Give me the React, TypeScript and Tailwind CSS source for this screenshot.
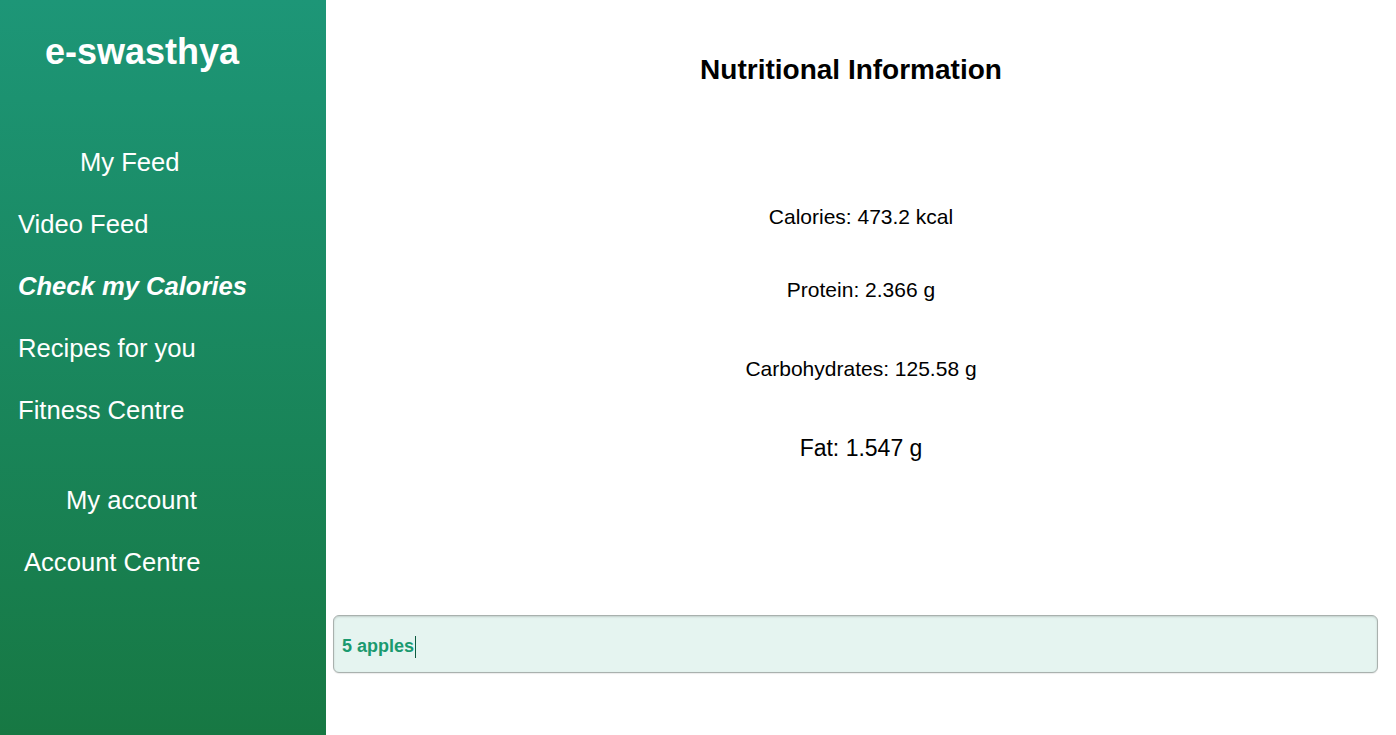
import React from 'react';

const navItems = [
  { label: 'Video Feed', pad: 'pl-[18px]' },
  { label: 'Check my Calories', pad: 'pl-[18px]', active: true },
  { label: 'Recipes for you', pad: 'pl-[18px]' },
  { label: 'Fitness Centre', pad: 'pl-[18px]' },
];

const nutrients = [
  { text: 'Calories: 473.2 kcal', cls: 'mt-[117px] text-[21px]' },
  { text: 'Protein: 2.366 g', cls: 'mt-[43px] text-[21px]' },
  { text: 'Carbohydrates: 125.58 g', cls: 'mt-[49px] text-[21px]' },
  { text: 'Fat: 1.547 g', cls: 'mt-[49px] text-[23px]' },
];

export default function App() {
  return (
    <div
      className="flex h-[735px] w-full overflow-hidden bg-white"
      style={{ fontFamily: '"Liberation Sans", Arial, sans-serif' }}
    >
      <aside className="flex w-[326px] shrink-0 flex-col bg-gradient-to-b from-[#1d9677] to-[#177843] text-white">
        <h1 className="mt-[32px] pl-[45px] text-[36px] font-bold leading-[40px]">e-swasthya</h1>

        <div className="mt-[59px] pl-[80px] text-[25.6px] leading-[62px]">My Feed</div>
        {navItems.map((item) => (
          <div
            key={item.label}
            className={`${item.pad} text-[25.6px] leading-[62px] ${item.active ? 'font-bold italic' : ''}`}
          >
            {item.label}
          </div>
        ))}

        <div className="mt-[28px] pl-[66px] text-[25.6px] leading-[62px]">My account</div>
        <div className="pl-[24px] text-[25.6px] leading-[62px]">Account Centre</div>
      </aside>

      <main className="flex flex-1 flex-col text-black">
        <h2 className="mt-[55px] pr-[20px] text-center text-[28px] font-bold leading-[30px]">
          Nutritional Information
        </h2>

        {nutrients.map((n) => (
          <p key={n.text} className={`${n.cls} text-center leading-[30px]`}>
            {n.text}
          </p>
        ))}

        <div className="mt-[152px] ml-[7px] mr-[18px] flex h-[58px] items-center rounded-[6px] border border-[#a9b1ae] bg-[#e5f4f0] pl-[8px] pt-[5px] shadow-[inset_0_1px_2px_rgba(0,0,0,0.15),0_1px_1px_rgba(0,0,0,0.08)]">
          <span className="text-[18px] font-bold text-[#1a9a6f]">5 apples</span>
          <span className="ml-px inline-block h-[22px] w-px bg-[#0d5c40]" />
        </div>
      </main>
    </div>
  );
}
